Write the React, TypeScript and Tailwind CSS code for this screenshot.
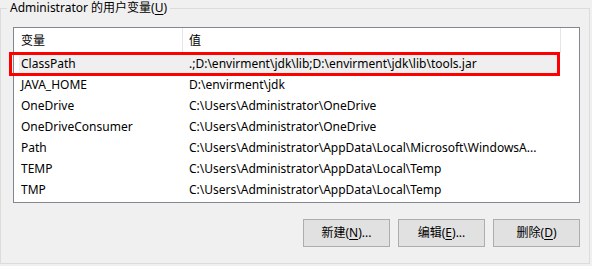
import React from "react";

/* ── Data ── */

const rows: { name: string; value: string }[] = [
  { name: "ClassPath", value: ".;D:\\envirment\\jdk\\lib;D:\\envirment\\jdk\\lib\\tools.jar" },
  { name: "JAVA_HOME", value: "D:\\envirment\\jdk" },
  { name: "OneDrive", value: "C:\\Users\\Administrator\\OneDrive" },
  { name: "OneDriveConsumer", value: "C:\\Users\\Administrator\\OneDrive" },
  { name: "Path", value: "C:\\Users\\Administrator\\AppData\\Local\\Microsoft\\WindowsA..." },
  { name: "TEMP", value: "C:\\Users\\Administrator\\AppData\\Local\\Temp" },
  { name: "TMP", value: "C:\\Users\\Administrator\\AppData\\Local\\Temp" },
];

const font = "font-['Noto_Sans','Noto_Sans_CJK_SC',sans-serif]";

/* ── Button ── */

function DlgButton({ label, hotkey, suffix }: { label: string; hotkey: string; suffix: string }) {
  return (
    <button
      type="button"
      className="flex h-[28px] w-[87px] items-center justify-center border border-[#adadad] bg-[#e1e1e1] text-[12px] leading-none text-black"
    >
      {label}(<span className="underline underline-offset-2">{hotkey}</span>){suffix}
    </button>
  );
}

/* ── App ── */

export default function App() {
  return (
    <div className={`h-[266px] w-[592px] bg-[#f0f0f0] pt-[8px] text-black ${font}`}>
      {/* Group box */}
      <div className="relative h-[256px] w-[590px] border border-[#dcdcdc] pl-[12px] pt-[18px]">
        <span className="absolute -top-[10px] left-[6px] bg-[#f0f0f0] px-[3px] text-[12px] leading-[18px]">
          Administrator 的用户变量(<span className="underline underline-offset-2">U</span>)
        </span>

        <div className="flex w-[567px] flex-col">
          {/* List view */}
          <div className="h-[176px] border border-[#828790] bg-white text-[12px]">
            {/* Header */}
            <div className="flex h-[25px] items-center">
              <div className="flex h-full w-[169px] items-center border-r border-[#e5e5e5] pl-[7px]">变量</div>
              <div className="flex h-full w-[378px] items-center border-r border-[#e5e5e5] pl-[6px]">值</div>
            </div>

            {/* Rows */}
            {rows.map((r, i) => (
              <div key={r.name} className="relative flex h-[21px] items-center">
                {i === 0 && (
                  <>
                    <div className="absolute inset-y-0 left-[5px] w-[539px] bg-[#efefef]" />
                    {/* Red annotation box */}
                    <div className="absolute -left-[5px] -top-[1px] h-[24px] w-[551px] border-[3px] border-[#ff0000]" />
                  </>
                )}
                <div className="relative w-[170px] pl-[7px] whitespace-nowrap">{r.name}</div>
                <div className="relative pl-[5px] whitespace-nowrap">{r.value}</div>
              </div>
            ))}
          </div>

          {/* Buttons */}
          <div className="mt-[16px] flex justify-end gap-[8px]">
            <DlgButton label="新建" hotkey="N" suffix="..." />
            <DlgButton label="编辑" hotkey="E" suffix="..." />
            <DlgButton label="删除" hotkey="D" suffix="" />
          </div>
        </div>
      </div>
    </div>
  );
}
